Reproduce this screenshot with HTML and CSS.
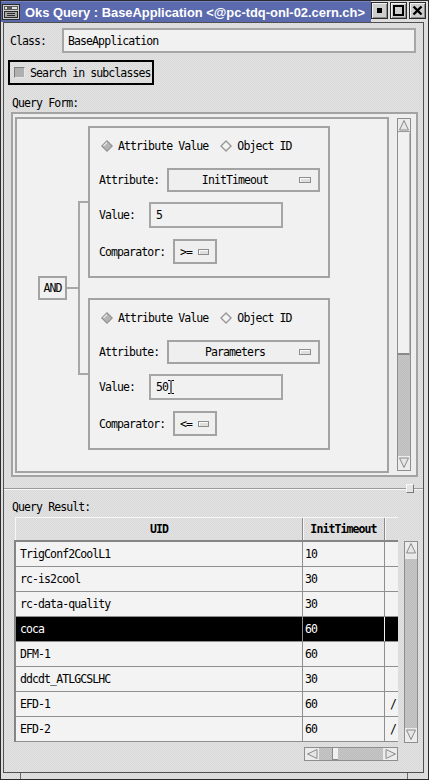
FILE: index.html
```html
<!DOCTYPE html>
<html>
<head>
<meta charset="utf-8">
<title>Oks Query</title>
<link rel="stylesheet" href="styles.css">
</head>
<body>
<div class="window">
  <div class="titlebar">
    <div class="title-main">
      <svg class="app-icon" width="18" height="16" viewBox="0 0 18 16">
        <rect x="0.5" y="0.5" width="17" height="15" fill="#cfcfcf" stroke="#2a2a2a"/>
        <rect x="2" y="2" width="14" height="4" fill="#5a5a5a"/>
        <rect x="3" y="3" width="2" height="2" fill="#e0e0e0"/>
        <rect x="10" y="3" width="5" height="2" fill="#e0e0e0"/>
        <rect x="2.5" y="7.5" width="13" height="6" fill="#a8a8a8" stroke="#2a2a2a"/>
        <path d="M5 9.5H13M5 11.5H13" stroke="#2a2a2a"/>
      </svg>
      <span class="title">Oks Query : BaseApplication &lt;@pc-tdq-onl-02.cern.ch&gt;</span>
    </div>
    <div class="wm-buttons">
      <span class="wm-btn"><svg width="15" height="15" viewBox="0 0 15 15"><rect x="5" y="5" width="5" height="5" fill="#000"/></svg></span>
      <span class="wm-btn"><svg width="15" height="15" viewBox="0 0 15 15"><rect x="3" y="3" width="9" height="9" fill="none" stroke="#000" stroke-width="2"/></svg></span>
      <span class="wm-btn"><svg width="15" height="15" viewBox="0 0 15 15"><path d="M3.5 3.5L11.5 11.5M11.5 3.5L3.5 11.5" stroke="#000" stroke-width="2.4"/></svg></span>
    </div>
  </div>

  <div class="client">
    <div class="class-row">
      <span class="class-label">Class:</span>
      <div class="entry class-entry">BaseApplication</div>
    </div>

    <div class="check-frame">
      <span class="checkbox"></span>
      <span>Search in subclasses</span>
    </div>

    <div class="section-label">Query Form:</div>

    <div class="form-frame">
      <div class="canvas">
        <div class="tree">
          <div class="and-box">AND</div>
          <div class="and-line"></div>
          <div class="bracket"></div>
          <div class="conds">
            <div class="cond">
              <div class="radio-row">
                <span class="radio"><svg class="diamond" width="12" height="12" viewBox="0 0 12 12"><polygon points="6,0 12,6 6,12 0,6" fill="#8e8e8e"/><polygon points="6,1.5 10.5,6 6,10.5 1.5,6" fill="#b4b4b4"/><polygon points="6,1.5 1.5,6 3.5,6 6,3.5" fill="#e4e4e4"/></svg>Attribute Value</span>
                <span class="radio radio-second"><svg class="diamond" width="12" height="12" viewBox="0 0 12 12"><polygon points="6,0 12,6 6,12 0,6" fill="#9a9a9a"/><polygon points="6,2 10,6 6,10 2,6" fill="#f4f4f4"/></svg>Object ID</span>
              </div>
              <div class="field-row attr-row">
                <span class="flabel attr-label">Attribute:</span>
                <div class="optmenu"><span class="opt-text">InitTimeout</span><span class="indicator"></span></div>
              </div>
              <div class="field-row value-row">
                <span class="flabel value-label">Value:</span>
                <div class="entry value-entry">5</div>
              </div>
              <div class="field-row comp-row">
                <span class="flabel comp-label">Comparator:</span>
                <div class="combtn"><span>&gt;=</span><span class="indicator small"></span></div>
              </div>
            </div>

            <div class="cond">
              <div class="radio-row">
                <span class="radio"><svg class="diamond" width="12" height="12" viewBox="0 0 12 12"><polygon points="6,0 12,6 6,12 0,6" fill="#8e8e8e"/><polygon points="6,1.5 10.5,6 6,10.5 1.5,6" fill="#b4b4b4"/><polygon points="6,1.5 1.5,6 3.5,6 6,3.5" fill="#e4e4e4"/></svg>Attribute Value</span>
                <span class="radio radio-second"><svg class="diamond" width="12" height="12" viewBox="0 0 12 12"><polygon points="6,0 12,6 6,12 0,6" fill="#9a9a9a"/><polygon points="6,2 10,6 6,10 2,6" fill="#f4f4f4"/></svg>Object ID</span>
              </div>
              <div class="field-row attr-row">
                <span class="flabel attr-label">Attribute:</span>
                <div class="optmenu"><span class="opt-text">Parameters</span><span class="indicator"></span></div>
              </div>
              <div class="field-row value-row">
                <span class="flabel value-label">Value:</span>
                <div class="entry value-entry">50<svg class="ibeam" width="6" height="14" viewBox="0 0 6 14"><path d="M0 0.5H2.5M3.5 0.5H6M3 1V13M0 13.5H2.5M3.5 13.5H6" stroke="#000" stroke-width="1"/></svg></div>
              </div>
              <div class="field-row comp-row">
                <span class="flabel comp-label">Comparator:</span>
                <div class="combtn"><span>&lt;=</span><span class="indicator small"></span></div>
              </div>
            </div>
          </div>
        </div>
      </div>
      <div class="vscroll form-scroll">
        <span class="arrow"><svg width="12" height="13" viewBox="0 0 12 13"><polygon points="6,1.5 10.5,11 1.5,11" fill="#e6e6e6" stroke="#8a8a8a"/><path d="M0 12.5H12" stroke="#9a9a9a"/></svg></span>
        <span class="thumb"></span>
        <span class="trough"></span>
        <span class="arrow"><svg width="12" height="13" viewBox="0 0 12 13"><polygon points="1.5,2 10.5,2 6,11.5" fill="#e6e6e6" stroke="#8a8a8a"/></svg></span>
      </div>
    </div>

    <div class="sash"><span class="sash-handle"></span></div>

    <div class="section-label result-label">Query Result:</div>

    <div class="result">
      <div class="table-area">
        <div class="thead">
          <div class="th th-uid">UID</div>
          <div class="th th-num">InitTimeout</div>
          <div class="th th-extra"></div>
        </div>
        <div class="tbody">
          <div class="tr"><span class="td">TrigConf2CoolL1</span><span class="td num">10</span><span class="td extra"></span></div>
          <div class="tr"><span class="td">rc-is2cool</span><span class="td num">30</span><span class="td extra"></span></div>
          <div class="tr"><span class="td">rc-data-quality</span><span class="td num">30</span><span class="td extra"></span></div>
          <div class="tr selected"><span class="td">coca</span><span class="td num">60</span><span class="td extra"></span></div>
          <div class="tr"><span class="td">DFM-1</span><span class="td num">60</span><span class="td extra"></span></div>
          <div class="tr"><span class="td">ddcdt_ATLGCSLHC</span><span class="td num">30</span><span class="td extra"></span></div>
          <div class="tr"><span class="td">EFD-1</span><span class="td num">60</span><span class="td extra">/</span></div>
          <div class="tr"><span class="td">EFD-2</span><span class="td num">60</span><span class="td extra">/</span></div>
        </div>
        <div class="hscroll">
          <span class="harrow"><svg width="13" height="12" viewBox="0 0 13 12"><polygon points="1.5,6 11,1.5 11,10.5" fill="#e6e6e6" stroke="#8a8a8a"/></svg></span>
          <span class="htrough-a"></span>
          <span class="hthumb"></span>
          <span class="htrough-b"></span>
          <span class="harrow"><svg width="13" height="12" viewBox="0 0 13 12"><polygon points="11.5,6 2,1.5 2,10.5" fill="#e6e6e6" stroke="#8a8a8a"/></svg></span>
        </div>
      </div>
      <div class="vscroll result-scroll">
        <span class="arrow"><svg width="12" height="16" viewBox="0 0 12 16"><polygon points="6,1.5 10.5,11 1.5,11" fill="#e6e6e6" stroke="#8a8a8a"/><path d="M0 14.5H12" stroke="#e8e8e8" stroke-width="2"/></svg></span>
        <span class="trough"></span>
        <span class="arrow"><svg width="12" height="13" viewBox="0 0 12 13"><polygon points="1.5,2 10.5,2 6,11.5" fill="#e6e6e6" stroke="#8a8a8a"/></svg></span>
      </div>
    </div>
  </div>

  <div class="bottom-frame"><span class="grip"></span><span class="grip"></span></div>
</div>
</body>
</html>
```

FILE: styles.css
```css
* { box-sizing: border-box; }

html, body {
  margin: 0;
  padding: 0;
}

body {
  width: 429px;
  height: 780px;
  overflow: hidden;
  background: #dedede;
  font-family: "DejaVu Sans Mono", monospace;
  font-size: 11.5px;
  letter-spacing: -0.9px;
  color: #000;
}

.window {
  width: 429px;
  height: 780px;
  border: 1px solid #2b2b2b;
  background-color: #dcdcdc;
  background-image: repeating-conic-gradient(#e2e2e2 0 25%, #d9d9d9 0 50%);
  background-size: 2px 2px;
  display: flex;
  flex-direction: column;
}

/* ---------- title bar ---------- */
.titlebar {
  height: 21px;
  display: flex;
  flex: none;
}

.title-main {
  width: 370px;
  flex: none;
  overflow: hidden;
  background: #5b6aad;
  border-top: 1px solid #7482c0;
  display: flex;
  align-items: center;
  padding-left: 1px;
}

.app-icon {
  flex: none;
  margin-right: 5px;
}

.title {
  font-family: "Liberation Sans", Arial, sans-serif;
  font-weight: bold;
  font-size: 12.9px;
  letter-spacing: 0;
  color: #fff;
  white-space: nowrap;
}

.wm-buttons {
  display: flex;
  gap: 2px;
  padding-top: 1px;
}

.wm-btn {
  width: 17px;
  height: 17px;
  background: #cdcdcd;
  border: 1px solid #2a2a2a;
  box-shadow: inset 1px 1px 0 #f2f2f2, inset -1px -1px 0 #8c8c8c;
  display: flex;
  align-items: center;
  justify-content: center;
}

/* ---------- client ---------- */
.client {
  flex: none;
  height: 751px;
  margin: 0 4px 0 2px;
  border: 1px solid #505050;
  display: flex;
  flex-direction: column;
}

.class-row {
  margin-top: 5px;
  height: 25px;
  display: flex;
  align-items: center;
  padding-left: 6px;
}

.class-label {
  width: 52px;
}

.entry {
  background: #f1f1f1;
  border: 2px solid #a6a6a6;
  display: flex;
  align-items: center;
  padding-left: 4px;
}

.class-entry {
  width: 354px;
  height: 25px;
}

.check-frame {
  margin: 7px 0 0 4px;
  width: 146px;
  height: 25px;
  border: 2px solid #000;
  display: flex;
  align-items: center;
  padding-left: 4px;
  gap: 5px;
}

.checkbox {
  width: 11px;
  height: 11px;
  background: #b0b0b0;
  border: 1px solid;
  border-color: #7e7e7e #e6e6e6 #e6e6e6 #7e7e7e;
}

.section-label {
  margin: 11px 0 0 8px;
  height: 14px;
  line-height: 14px;
}

/* ---------- query form ---------- */
.form-frame {
  margin: 2px 0 0 7px;
  width: 407px;
  height: 365px;
  border: 2px solid #a3a3a3;
  background: #eeeeee;
  padding: 3px 5px 2px 2px;
  display: flex;
  gap: 8px;
}

.canvas {
  width: 374px;
  height: 356px;
  border: 2px solid #a3a3a3;
  background: #f1f1f1;
  overflow: hidden;
}

.tree {
  display: flex;
  align-items: center;
  padding: 7px 0 0 21px;
}

.and-box {
  width: 29px;
  height: 24px;
  border: 2px solid #a3a3a3;
  display: flex;
  align-items: center;
  justify-content: center;
}

.and-line {
  width: 11px;
  height: 2px;
  background: #a8a8a8;
}

.bracket {
  width: 10px;
  height: 174px;
  border: 2px solid #a8a8a8;
  border-right: none;
}

.conds {
  display: flex;
  flex-direction: column;
  gap: 20px;
}

.cond {
  width: 242px;
  height: 152px;
  border: 2px solid #a3a3a3;
  padding: 11px 0 0 9px;
  display: flex;
  flex-direction: column;
}

.radio-row {
  height: 14px;
  display: flex;
  align-items: center;
}

.radio {
  display: flex;
  align-items: center;
  gap: 5px;
  margin-left: 2px;
}

.radio-second {
  margin-left: 12px;
}

.field-row {
  display: flex;
  align-items: center;
}

.attr-row {
  margin-top: 15px;
  height: 24px;
}

.value-row {
  margin-top: 10px;
  height: 26px;
}

.comp-row {
  margin-top: 11px;
  height: 25px;
}

.attr-label { width: 68px; }
.value-label { width: 50px; }
.comp-label { width: 74px; }

.optmenu {
  width: 153px;
  height: 24px;
  border: 2px solid #a3a3a3;
  background: #efefef;
  display: flex;
  align-items: center;
}

.opt-text {
  flex: 1;
  text-align: center;
  padding-left: 2px;
}

.indicator {
  width: 12px;
  height: 6px;
  margin-right: 7px;
  background: #dedede;
  border: 1px solid #8c8c8c;
  box-shadow: inset 1px 1px 0 #fafafa;
}

.indicator.small {
  width: 11px;
  margin-right: 0;
}

.value-entry {
  width: 134px;
  height: 26px;
  padding-left: 5px;
}

.combtn {
  width: 44px;
  height: 25px;
  border: 2px solid #a3a3a3;
  background: #efefef;
  display: flex;
  align-items: center;
  padding-left: 5px;
  gap: 6px;
}

/* ---------- scrollbars ---------- */
.vscroll {
  width: 14px;
  border: 1px solid #8e8e8e;
  background-color: #c2c2c2;
  background-image: repeating-conic-gradient(#c8c8c8 0 25%, #bbbbbb 0 50%);
  background-size: 2px 2px;
  display: flex;
  flex-direction: column;
}

.form-scroll {
  margin-top: 1px;
  height: 353px;
}

.arrow {
  flex: none;
  height: 14px;
  display: flex;
  justify-content: center;
  align-items: flex-start;
  background: #ececec;
}

.result-scroll .arrow:first-child {
  height: 17px;
}

.thumb {
  flex: none;
  height: 222px;
  background: #f1f1f1;
  border-bottom: 2px solid #8a8a8a;
  border-right: 1px solid #b8b8b8;
}

.trough {
  flex: 1;
}

.sash {
  margin-top: 7px;
  height: 9px;
  display: flex;
  background: linear-gradient(#9a9a9a, #9a9a9a) 0 4px / 100% 1px no-repeat,
              linear-gradient(#f6f6f6, #f6f6f6) 0 5px / 100% 1px no-repeat;
}

.sash-handle {
  margin-left: 402px;
  width: 8px;
  height: 9px;
  background: #e4e4e4;
  border: 1px solid;
  border-color: #f8f8f8 #7a7a7a #7a7a7a #f8f8f8;
}

.result-label {
  margin-top: 7px;
}

/* ---------- result table ---------- */
.result {
  margin-top: 3px;
  display: flex;
}

.table-area {
  margin-left: 10px;
  width: 384px;
  display: flex;
  flex-direction: column;
}

.thead {
  margin-left: 1px;
  width: 383px;
  height: 23px;
  display: grid;
  grid-template-columns: 287px 82px 14px;
  border-top: 1px solid #f6f6f6;
  border-left: 1px solid #f6f6f6;
}

.th {
  font-weight: bold;
  display: flex;
  align-items: center;
  justify-content: center;
  border-right: 1px solid #8a8a8a;
  box-shadow: 1px 0 0 #f6f6f6;
}

.th-extra {
  border-right: none;
  box-shadow: none;
}

.tbody {
  width: 384px;
  border-top: 2px solid #858585;
  border-left: 2px solid #858585;
  background: #f3f3f3;
}

.tr {
  height: 25px;
  display: grid;
  grid-template-columns: 286px 82px 14px;
  border-bottom: 1px solid #8f8f8f;
}

.td {
  display: flex;
  align-items: center;
  padding-left: 4px;
  white-space: nowrap;
}

.td.num {
  border-left: 1px solid #8f8f8f;
  padding-left: 2px;
}

.td.extra {
  border-left: 1px solid #8f8f8f;
  padding-left: 5px;
}

.tr.selected {
  background: #000;
  color: #fff;
}

.tr.selected .td.extra {
  border-left-color: #f0f0f0;
}

.hscroll {
  margin: 5px 0 0 290px;
  width: 94px;
  height: 14px;
  border: 1px solid #8e8e8e;
  background-color: #c2c2c2;
  background-image: repeating-conic-gradient(#c8c8c8 0 25%, #bbbbbb 0 50%);
  background-size: 2px 2px;
  display: flex;
}

.harrow {
  flex: none;
  width: 14px;
  display: flex;
  align-items: center;
  justify-content: center;
  background: #ececec;
}

.htrough-a {
  width: 13px;
}

.hthumb {
  width: 6px;
  background: #f1f1f1;
  border-left: 1px solid #8a8a8a;
  border-bottom: 1px solid #8a8a8a;
}

.htrough-b {
  flex: 1;
}

.result-scroll {
  margin: 24px 0 0 6px;
  height: 202px;
}

/* ---------- bottom frame ---------- */
.bottom-frame {
  flex: 1;
  display: flex;
  justify-content: space-between;
  padding: 0 20px 0 19px;
}

.grip {
  width: 1px;
  background: #6a6a6a;
}
```
